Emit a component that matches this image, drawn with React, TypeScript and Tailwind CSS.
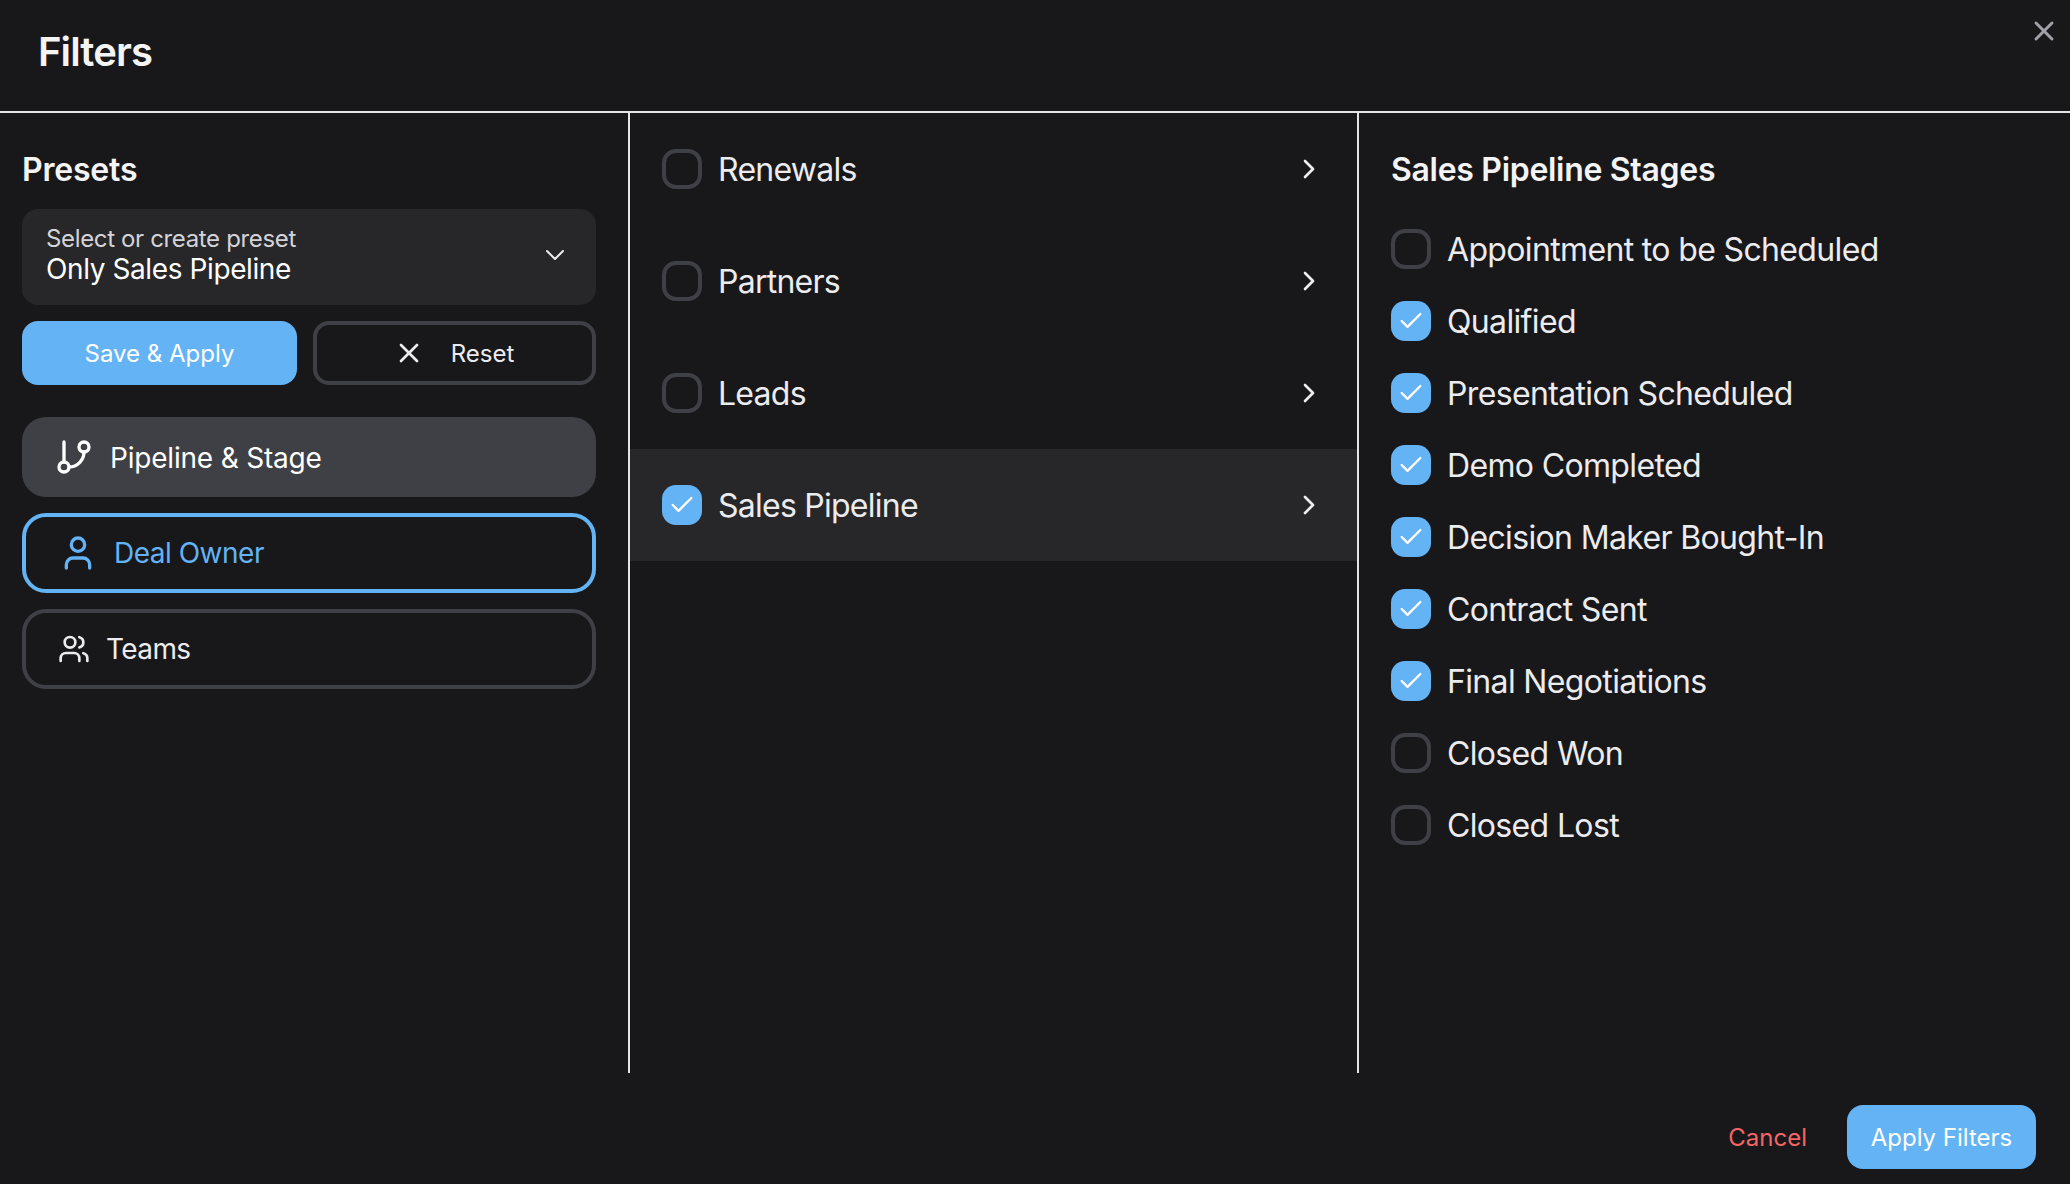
import { Check, ChevronDown, ChevronRight, GitBranch, User, Users, X } from "lucide-react";

const categories = [
  { name: "Renewals", checked: false },
  { name: "Partners", checked: false },
  { name: "Leads", checked: false },
  { name: "Sales Pipeline", checked: true },
];

const stages = [
  { name: "Appointment to be Scheduled", checked: false },
  { name: "Qualified", checked: true },
  { name: "Presentation Scheduled", checked: true },
  { name: "Demo Completed", checked: true },
  { name: "Decision Maker Bought-In", checked: true },
  { name: "Contract Sent", checked: true },
  { name: "Final Negotiations", checked: true },
  { name: "Closed Won", checked: false },
  { name: "Closed Lost", checked: false },
];

function Checkbox({ checked }: { checked: boolean }) {
  if (checked) {
    return (
      <span className="flex h-10 w-10 shrink-0 items-center justify-center rounded-[14px] bg-[#63b3f5] text-white">
        <Check size={28} strokeWidth={2} />
      </span>
    );
  }
  return <span className="h-10 w-10 shrink-0 rounded-[14px] border-4 border-[#3f3f46]" />;
}

export default function App() {
  return (
    <div className="relative flex h-[1184px] w-[2070px] flex-col overflow-hidden bg-[#18181b] font-['Inter',sans-serif] text-[#ececee]">
      <header className="flex h-[113px] shrink-0 items-start border-b-2 border-[#e4e4e7] pl-[38px] pt-[29px]">
        <h1 className="text-[40px] leading-[46px] font-semibold tracking-[-0.9px] text-[#f4f4f5]">Filters</h1>
      </header>
      <button className="absolute right-[10px] top-[15px] text-[#a1a1aa]">
        <X size={32} strokeWidth={2.2} />
      </button>

      <div className="flex h-[960px] shrink-0">
        {/* Presets column */}
        <aside className="w-[630px] shrink-0 border-r-2 border-[#e4e4e7] pl-[22px] pr-[32px]">
          <h2 className="mt-[38px] text-[32px] leading-[38px] font-semibold tracking-[-0.2px] text-[#f4f4f5]">Presets</h2>
          <div className="mt-[20px] flex h-24 items-center justify-between rounded-2xl bg-[#27272a] pl-6 pr-[25px]">
            <div className="pb-[6px]">
              <p className="text-[24px] leading-[30px] tracking-[-0.35px] text-[#d4d4d8]">Select or create preset</p>
              <p className="text-[28px] leading-[30px] tracking-[-0.4px] text-white">Only Sales Pipeline</p>
            </div>
            <div className="pb-1">
              <ChevronDown size={32} strokeWidth={1.5} />
            </div>
          </div>
          <div className="mt-4 flex gap-4">
            <button className="h-16 w-[275px] rounded-2xl bg-[#63b3f5] pt-0.5 text-[24px] font-normal text-white">
              Save &amp; Apply
            </button>
            <button className="flex h-16 flex-1 items-center justify-center gap-[26px] rounded-2xl border-4 border-[#3f3f46] pr-0.5 text-[24px] font-normal">
              <X size={32} strokeWidth={2} />
              <span className="pt-0.5">Reset</span>
            </button>
          </div>
          <div className="mt-8 flex flex-col gap-4">
            <div className="flex h-20 items-center gap-4 rounded-3xl bg-[#3f3f46] px-8 text-[28px] tracking-[-0.2px] text-white">
              <GitBranch size={40} strokeWidth={2} />
              <span className="pt-0.5">Pipeline &amp; Stage</span>
            </div>
            <div className="flex h-20 items-center gap-4 rounded-3xl border-4 border-[#63b3f5] px-8 text-[28px] tracking-[-0.5px] text-[#63b3f5]">
              <User size={40} strokeWidth={2} />
              <span>Deal Owner</span>
            </div>
            <div className="flex h-20 items-center gap-4 rounded-3xl border-4 border-[#3f3f46] px-8 text-[28px] tracking-[-0.6px]">
              <Users size={32} strokeWidth={2} />
              <span>Teams</span>
            </div>
          </div>
        </aside>

        {/* Category column */}
        <section className="w-[729px] shrink-0 border-r-2 border-[#e4e4e7]">
          {categories.map((category) => (
            <div
              key={category.name}
              className={`flex h-28 items-center gap-4 pl-8 pr-[32px] ${category.checked ? "bg-[#27272a]" : ""}`}
            >
              <Checkbox checked={category.checked} />
              <span className="flex-1 pt-0.5 text-[32px] leading-[40px] tracking-[-0.75px]">{category.name}</span>
              <ChevronRight size={32} strokeWidth={2} />
            </div>
          ))}
        </section>

        {/* Stage column */}
        <section className="flex-1 pl-8">
          <h2 className="mt-[38px] text-[32px] leading-[38px] font-semibold tracking-[-0.3px] text-[#f4f4f5]">Sales Pipeline Stages</h2>
          <div className="mt-[40px] flex flex-col gap-8">
            {stages.map((stage) => (
              <div key={stage.name} className="flex h-10 items-center gap-4">
                <Checkbox checked={stage.checked} />
                <span className="pt-0.5 text-[32px] leading-[40px] tracking-[-0.65px]">{stage.name}</span>
              </div>
            ))}
          </div>
        </section>
      </div>

      <footer className="flex flex-1 items-start justify-end gap-10 pr-[34px] pt-8">
        <button className="h-16 pt-0.5 text-[24px] text-[#f56565]">Cancel</button>
        <button className="h-16 w-[189px] rounded-2xl bg-[#63b3f5] pt-0.5 text-[24px] font-normal text-white">
          Apply Filters
        </button>
      </footer>
    </div>
  );
}
